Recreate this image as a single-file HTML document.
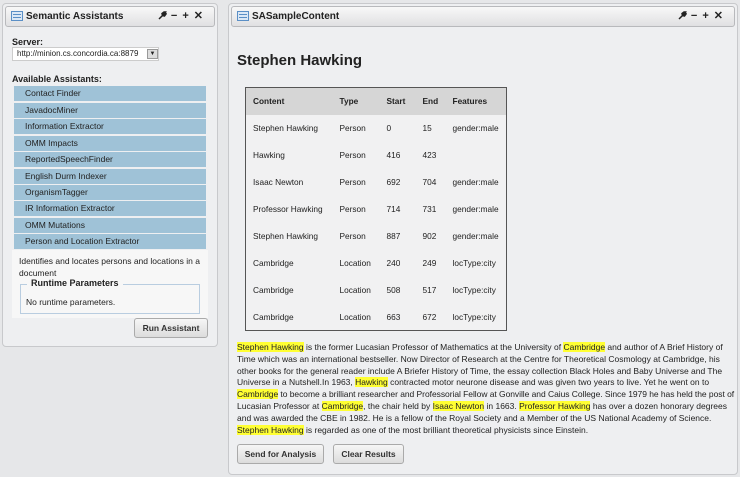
<!DOCTYPE html><html><head><style>
*{margin:0;padding:0;box-sizing:border-box}
body{width:740px;height:477px;background:#e6e7e9;font-family:"Liberation Sans",sans-serif;position:relative;overflow:hidden;color:#222}
.panel{position:absolute;background:#eeeff1;border:1px solid #c8c9cc;border-radius:4px}
.tb{position:absolute;left:2px;right:2px;top:2px;height:21px;border:1px solid #b8b9bc;border-radius:3px;background:linear-gradient(#f8f8f8,#e0e0e2);font-weight:bold;font-size:10px;line-height:19px;padding-left:20px}
.ic{position:absolute;left:5px;top:4px;width:12px;height:10px;border:1px solid #5b8fc6;background:#dbe8f6}
.ic:before{content:"";position:absolute;left:1px;top:2px;width:8px;height:1px;background:#5b8fc6;box-shadow:0 3px 0 #5b8fc6}
.ctl{position:absolute;right:6px;top:0;font-size:11px;letter-spacing:5px}
.ctl svg{vertical-align:-1px;margin-right:4px}
.abs{position:absolute}
.li{position:absolute;left:14px;width:192px;height:15px;background:#9fc2d7;font-size:8.5px;line-height:15px;padding-left:11px}
.btn{position:absolute;border:1px solid #aaa;border-radius:3px;background:linear-gradient(#f6f6f6,#dcdcdc);font-weight:bold;font-size:8.5px;text-align:center;color:#333}
table{border-collapse:collapse;font-size:8.3px}
td{height:27px;padding:0}
.hl{background:#ffff33}
.p div{white-space:nowrap}
</style></head><body>
<div class="panel" style="left:2px;top:3px;width:216px;height:344px">
<div class="tb"><div class="ic"></div>Semantic Assistants<span class="ctl"><svg width="9" height="9" viewBox="0 0 9 9"><path d="M1 8L5 4M4.5 4.5L4 2.5 6 1 7.5 1 6.5 2.5 8 2.5 8 3 6.5 5z" stroke="#222" stroke-width="1.5" fill="#222"/></svg>−+✕</span></div>
</div>
<div class="abs" style="left:12px;top:37px;font-size:9px;font-weight:bold">Server:</div>
<div class="abs" style="left:12px;top:47px;width:147px;height:14px;background:#fff;border:1px solid #ccc;font-size:8px;line-height:12px;padding-left:4px">http://minion.cs.concordia.ca:8879</div>
<div class="abs" style="left:147px;top:49px;width:11px;height:10px;background:#ddd;border:1px solid #999;font-size:6px;text-align:center;line-height:9px">▼</div>
<div class="abs" style="left:12px;top:74px;font-size:9px;font-weight:bold">Available Assistants:</div>
<div class="li" style="top:86px">Contact Finder</div>
<div class="li" style="top:103px">JavadocMiner</div>
<div class="li" style="top:119px">Information Extractor</div>
<div class="li" style="top:136px">OMM Impacts</div>
<div class="li" style="top:152px">ReportedSpeechFinder</div>
<div class="li" style="top:169px">English Durm Indexer</div>
<div class="li" style="top:185px">OrganismTagger</div>
<div class="li" style="top:201px">IR Information Extractor</div>
<div class="li" style="top:218px">OMM Mutations</div>
<div class="li" style="top:234px">Person and Location Extractor</div>
<div class="abs" style="left:12px;top:250px;width:196px;height:68px;background:#f7f7f7"></div>
<div class="abs" style="left:19px;top:255px;width:185px;font-size:8.5px;line-height:12px">Identifies and locates persons and locations in a document</div>
<div class="abs" style="left:20px;top:284px;width:180px;height:30px;border:1px solid #b9cde0"></div>
<div class="abs" style="left:27px;top:278px;background:#f7f7f7;padding:0 4px;font-size:9px;font-weight:bold">Runtime Parameters</div>
<div class="abs" style="left:26px;top:297px;font-size:8.5px">No runtime parameters.</div>
<div class="btn" style="left:134px;top:318px;width:74px;height:20px;line-height:18px">Run Assistant</div>

<div class="panel" style="left:228px;top:3px;width:510px;height:472px">
<div class="tb"><div class="ic"></div>SASampleContent<span class="ctl"><svg width="9" height="9" viewBox="0 0 9 9"><path d="M1 8L5 4M4.5 4.5L4 2.5 6 1 7.5 1 6.5 2.5 8 2.5 8 3 6.5 5z" stroke="#222" stroke-width="1.5" fill="#222"/></svg>−+✕</span></div>
</div>
<div class="abs" style="left:237px;top:52px;font-size:15px;font-weight:bold">Stephen Hawking</div>
<table class="abs" style="left:245px;top:87px;width:262px;border:1px solid #555;background:#f1f1f2">
<tr style="background:#d6d6d6;font-weight:bold"><td style="padding-left:7px;width:94px">Content</td><td style="width:47px">Type</td><td style="width:36px">Start</td><td style="width:30px">End</td><td>Features</td></tr>
<tr><td style="padding-left:7px">Stephen Hawking</td><td>Person</td><td>0</td><td>15</td><td>gender:male</td></tr>
<tr><td style="padding-left:7px">Hawking</td><td>Person</td><td>416</td><td>423</td><td></td></tr>
<tr><td style="padding-left:7px">Isaac Newton</td><td>Person</td><td>692</td><td>704</td><td>gender:male</td></tr>
<tr><td style="padding-left:7px">Professor Hawking</td><td>Person</td><td>714</td><td>731</td><td>gender:male</td></tr>
<tr><td style="padding-left:7px">Stephen Hawking</td><td>Person</td><td>887</td><td>902</td><td>gender:male</td></tr>
<tr><td style="padding-left:7px">Cambridge</td><td>Location</td><td>240</td><td>249</td><td>locType:city</td></tr>
<tr><td style="padding-left:7px">Cambridge</td><td>Location</td><td>508</td><td>517</td><td>locType:city</td></tr>
<tr><td style="padding-left:7px">Cambridge</td><td>Location</td><td>663</td><td>672</td><td>locType:city</td></tr>
</table>
<div class="abs p" style="left:237px;top:342px;width:500px;font-size:8.5px;line-height:11.8px">
<div><span class="hl">Stephen Hawking</span> is the former Lucasian Professor of Mathematics at the University of <span class="hl">Cambridge</span> and author of A Brief History of</div>
<div>Time which was an international bestseller. Now Director of Research at the Centre for Theoretical Cosmology at Cambridge, his</div>
<div>other books for the general reader include A Briefer History of Time, the essay collection Black Holes and Baby Universe and The</div>
<div>Universe in a Nutshell.In 1963, <span class="hl">Hawking</span> contracted motor neurone disease and was given two years to live. Yet he went on to</div>
<div style="letter-spacing:-0.05px"><span class="hl">Cambridge</span> to become a brilliant researcher and Professorial Fellow at Gonville and Caius College. Since 1979 he has held the post of</div>
<div>Lucasian Professor at <span class="hl">Cambridge</span>, the chair held by <span class="hl">Isaac Newton</span> in 1663. <span class="hl">Professor Hawking</span> has over a dozen honorary degrees</div>
<div>and was awarded the CBE in 1982. He is a fellow of the Royal Society and a Member of the US National Academy of Science.</div>
<div><span class="hl">Stephen Hawking</span> is regarded as one of the most brilliant theoretical physicists since Einstein.</div>
</div>
<div class="btn" style="left:237px;top:444px;width:87px;height:20px;line-height:18px">Send for Analysis</div>
<div class="btn" style="left:333px;top:444px;width:71px;height:20px;line-height:18px">Clear Results</div>
</body></html>
